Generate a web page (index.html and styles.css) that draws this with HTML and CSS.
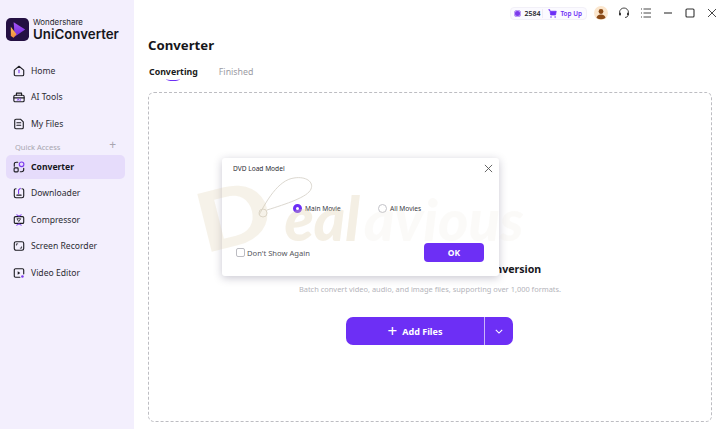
FILE: index.html
```html
<!DOCTYPE html>
<html lang="en">
<head>
<meta charset="utf-8">
<title>UniConverter</title>
<link rel="stylesheet" href="styles.css">
</head>
<body>
<div class="app">
  <aside class="sidebar">
    <div class="brand">
      <svg class="logo" viewBox="0 0 24 24" width="23" height="23">
        <defs>
          <linearGradient id="lg" x1="0" y1="0" x2="0" y2="1"><stop offset="0" stop-color="#a855f7"/><stop offset="1" stop-color="#6d28d9"/></linearGradient>
          <linearGradient id="lo" x1="0" y1="0" x2="0" y2="1"><stop offset="0" stop-color="#fbbf5a"/><stop offset="1" stop-color="#f08a3c"/></linearGradient>
        </defs>
        <rect width="24" height="24" rx="5" fill="#241043"/>
        <path d="M8 4.500 L20 12 L9 19.500 Z" fill="url(#lg)"/>
        <path d="M5 9 L11 17 L8 20.500 Q5.500 20 5 18 Z" fill="url(#lo)"/>
      </svg>
      <div class="brand-text">
        <span class="brand-top">Wondershare</span>
        <span class="brand-name">UniConverter</span>
      </div>
    </div>
    <nav class="nav">
      <a class="nav-item">
        <svg class="ico" viewBox="0 0 14 14"><path d="M1.500 6 L7 1.500 L12.500 6 V11 Q12.500 12.500 11 12.500 H3 Q1.500 12.500 1.500 11 Z" class="st"/><path d="M7 6 V9" class="st pu"/></svg>
        <span>Home</span>
      </a>
      <a class="nav-item">
        <svg class="ico" viewBox="0 0 14 14"><path d="M4 5 V2.500 H10 V5" class="st"/><rect x="1" y="5" width="12" height="7.500" rx="1.500" class="st"/><path d="M1 8 H13" class="st"/><path d="M5 11 L6 9 L7 11 M8.500 9 V11" class="st pu thin"/></svg>
        <span>AI Tools</span>
      </a>
      <a class="nav-item">
        <svg class="ico" viewBox="0 0 14 14"><path d="M2 3 Q2 1.500 3.500 1.500 H9 L12 4.500 V11 Q12 12.500 10.500 12.500 H3.500 Q2 12.500 2 11 Z" class="st"/><path d="M4.500 5.500 H9 M4.500 8.500 H9" class="st"/></svg>
        <span>My Files</span>
      </a>
      <div class="nav-section"><span>Quick Access</span><span class="plus">+</span></div>
      <a class="nav-item active">
        <svg class="ico" viewBox="0 0 14 14"><path d="M1.500 6 V3.500 Q1.500 1.500 4 1.500 H5.500" class="st"/><circle cx="10" cy="3.800" r="2.700" class="st pu"/><rect x="1.300" y="8" width="4.700" height="4.700" rx="1" class="st"/><path d="M12.500 8.500 V10 Q12.500 12.500 10 12.500 H8.500" class="st"/></svg>
        <span>Converter</span>
      </a>
      <a class="nav-item">
        <svg class="ico" viewBox="0 0 14 14"><path d="M3.500 2 Q1.500 2 1.500 4 V10.500 Q1.500 12.500 3.500 12.500 H10.500 Q12.500 12.500 12.500 10.500 V4 Q12.500 2 10.500 2" class="st"/><path d="M8.500 1.500 L6.500 3.500 V7.500" class="st pu"/><path d="M4.500 9.500 H9.500" class="st"/></svg>
        <span>Downloader</span>
      </a>
      <a class="nav-item">
        <svg class="ico" viewBox="0 0 14 14"><rect x="1.500" y="3" width="11" height="8" rx="1.500" class="st"/><path d="M4.500 1 L7 2.500 L9.500 1 M4.500 13 L7 11.500 L9.500 13" class="st pu"/><path d="M5 5.500 H9 L7 8.500 Z" class="st thin"/></svg>
        <span>Compressor</span>
      </a>
      <a class="nav-item">
        <svg class="ico" viewBox="0 0 14 14"><rect x="1.500" y="2" width="11" height="10" rx="2" class="st"/><path d="M4 6 V4.500 H5.500 M10 8 V9.500 H8.500" class="st thin"/></svg>
        <span>Screen Recorder</span>
      </a>
      <a class="nav-item">
        <svg class="ico" viewBox="0 0 14 14"><path d="M8 12 H3 Q1.500 12 1.500 10.500 V3.500 Q1.500 2 3 2 H11 Q12.500 2 12.500 3.500 V8" class="st"/><path d="M5.500 5 L8.500 7 L5.500 9 Z" class="fl"/><circle cx="11" cy="11" r="1.500" fill="#7c3aed"/></svg>
        <span>Video Editor</span>
      </a>
    </nav>
  </aside>

  <main class="main">
    <header class="topbar">
      <div class="credits">
        <span class="coin"></span>
        <span class="count">2584</span>
        <svg class="cart" viewBox="0 0 12 12" width="9" height="9"><path d="M.5 1 H2.500 L3.500 8 H10 L11 3 H3" fill="#6d2ff5" stroke="#6d2ff5"/><circle cx="4" cy="10.500" r="1" fill="#6d2ff5"/><circle cx="9.500" cy="10.500" r="1" fill="#6d2ff5"/></svg>
        <span class="topup">Top Up</span>
      </div>
      <svg class="avatar" viewBox="0 0 14 14" width="14" height="14"><circle cx="7" cy="7" r="7" fill="#fbe6cd"/><circle cx="7" cy="5.500" r="2.400" fill="#8a4a17"/><path d="M2.500 12 Q3 8.500 7 8.500 Q11 8.500 11.500 12 Q7 14.500 2.500 12 Z" fill="#8a4a17"/></svg>
      <svg class="tool" viewBox="0 0 12 12" width="12" height="12"><path d="M1.500 7 V5.500 A4.500 4.500 0 0 1 10.500 5.500 V7" class="tb"/><rect x="1" y="5.500" width="2" height="3" rx=".8" fill="#333"/><rect x="9" y="5.500" width="2" height="3" rx=".8" fill="#333"/><path d="M10 8.500 Q9.500 10.500 7 10.500" class="tb"/></svg>
      <svg class="tool" viewBox="0 0 12 12" width="12" height="12"><path d="M3.500 2 H11 M3.500 6 H11 M3.500 10 H11 M1 2 H2 M1 6 H2 M1 10 H2" class="tb"/></svg>
      <svg class="tool" viewBox="0 0 12 12" width="12" height="12"><path d="M2 6 H10" class="tb wide"/></svg>
      <svg class="tool" viewBox="0 0 12 12" width="12" height="12"><rect x="2" y="2" width="8" height="8" rx="1" class="tb wide"/></svg>
      <svg class="tool" viewBox="0 0 12 12" width="12" height="12"><path d="M2 2 L10 10 M10 2 L2 10" class="tb"/></svg>
    </header>
    <h1 class="title">Converter</h1>
    <div class="tabs">
      <span class="tab current">Converting</span>
      <span class="tab">Finished</span>
    </div>
    <section class="drop">
      <p class="drop-title">Add or Drag Files Here to Start Conversion</p>
      <p class="drop-sub">Batch convert video, audio, and image files, supporting over 1,000 formats.</p>
      <div class="add">
        <button class="add-main"><span class="add-plus">+</span> Add Files</button>
        <button class="add-more"><svg viewBox="0 0 10 6" width="8" height="5"><path d="M1 1 L5 5 L9 1" fill="none" stroke="#fff" stroke-width="1.300"/></svg></button>
      </div>
    </section>
  </main>
</div>

<div class="modal">
  <div class="modal-head">
    <span>DVD Load Model</span>
    <svg viewBox="0 0 10 10" width="9" height="9"><path d="M1 1 L9 9 M9 1 L1 9" fill="none" stroke="#555" stroke-width="1"/></svg>
  </div>
  <div class="radios">
    <label class="radio"><span class="dot on"></span>Main Movie</label>
    <label class="radio"><span class="dot"></span>All Movies</label>
  </div>
  <div class="modal-foot">
    <label class="check"><span class="box"></span>Don't Show Again</label>
    <button class="ok">OK</button>
  </div>
</div>

<div class="watermark" aria-hidden="true">
  <svg class="tag" viewBox="0 0 70 50" width="70" height="50"><path d="M3 41 C10 28 22 6 38 4 C50 2 58 8 55 15 C52 23 30 30 11 36" fill="none" stroke="#dcd8d0" stroke-width="1"/><circle cx="7" cy="39" r="4" fill="none" stroke="#dcd8d0" stroke-width="1"/></svg>
  <span class="wm-d">D</span><span class="wm-a">eal</span><span class="wm-b">avious</span>
</div>
```
FILE: styles.css
```css
* { box-sizing: border-box; }
html, body { margin: 0; height: 100%; }
body { font-family: "Noto Sans", "Open Sans", sans-serif; color: #1d1d22; overflow: hidden; background: #fff; }
.app { display: flex; width: 720px; height: 429px; }

.sidebar { width: 134px; flex: none; background: #f3effd; padding: 18px 9px 0 6px; }
.brand { display: flex; align-items: center; gap: 4px; height: 23px; }
.logo { flex: none; }
.brand-text { display: flex; flex-direction: column; line-height: 1; }
.brand-top { font-family: "Inter", sans-serif; font-size: 7.900px; line-height: 9px; color: #26262c; }
.brand-name { font-family: "Inter", sans-serif; font-size: 13.300px; line-height: 14px; font-weight: 600; color: #17171c; }

.nav { margin-top: 18px; display: flex; flex-direction: column; }
.nav-item { display: flex; align-items: center; gap: 6px; height: 24px; margin-bottom: 2.400px; padding-left: 7px; font-size: 8.600px; color: #2c2c33; border-radius: 5px; }
.nav-item.active { background: #e6dcfb; font-weight: 700; color: #16161b; }
.ico { width: 12px; height: 12px; flex: none; }
.st { fill: none; stroke: #1c1c22; stroke-width: 1.300; stroke-linejoin: round; stroke-linecap: round; }
.st.pu { stroke: #7c3aed; }
.st.thin { stroke-width: .9; }
.fl { fill: #1c1c22; }
.nav-section { display: flex; justify-content: space-between; align-items: center; height: 14px; margin: 1.800px 0 1px; padding: 0 9px 0 9px; font-size: 7.500px; color: #a8a6b0; }
.plus { font-size: 12px; line-height: 12px; margin-top: -3px; }

.main { flex: 1; min-width: 0; padding: 0 8px 7px 14px; display: flex; flex-direction: column; }
.topbar { height: 26px; margin-right: -6px; display: flex; align-items: center; justify-content: flex-end; gap: 10px; }
.credits { display: flex; align-items: center; height: 13px; padding: 0 4px 0 3px; gap: 3px; margin-right: -3px; background: #fbfaff; border: 1px solid #f2f0f8; border-radius: 4px; font-size: 7px; font-weight: 600; }
.coin { width: 7px; height: 7px; border-radius: 50%; background: #7c3aed; box-shadow: 0 0 0 1px #c4a6f7 inset; }
.count { color: #26262c; padding-right: 2px; border-right: 1px solid #eeecf4; }
.cart { margin-left: 2px; }
.topup { color: #6d2ff5; font-size: 6.400px; }
.tool { flex: none; }
.tb { fill: none; stroke: #333; stroke-width: .9; }
.tb.wide { stroke-width: 1.100; }

.title { margin: 8px 0 0; height: 22px; padding-top: 1px; font-size: 13.200px; line-height: 20px; font-weight: 700; color: #16161b; }
.tabs { display: flex; gap: 21px; height: 28px; margin-top: 8px; padding: 2px 0 0 1px; font-size: 8.800px; align-items: flex-start; }
.tab { color: #9b9ba3; line-height: 13px; }
.tab.current { color: #1a1a20; font-weight: 700; position: relative; }
.tab.current::after { content: ""; position: absolute; left: 17px; bottom: -2px; width: 14px; height: 3px; border-bottom: 1.500px solid #6d2ff5; border-radius: 0 0 50% 50%; }

.drop { flex: 1; border: 1px dashed #bdbdc2; border-radius: 6px; display: flex; flex-direction: column; align-items: center; padding-top: 169px; }
.drop-title { margin: 0; font-size: 10.600px; line-height: 15px; font-weight: 700; color: #17171c; white-space: nowrap; }
.drop-sub { margin: 6px 0 0; font-size: 7.450px; line-height: 12px; color: #b4b4ba; white-space: nowrap; }
.add { display: flex; margin-top: 22px; height: 28px; margin-left: -1px; }
.add button { border: 0; background: #6d2ff5; color: #fff; font-family: inherit; height: 28px; }
.add-main { width: 139px; border-radius: 7px 0 0 7px; font-size: 9px; font-weight: 700; display: flex; align-items: center; justify-content: center; gap: 5px; border-right: 1px solid #c9b4fa !important; }
.add-plus { font-size: 17px; line-height: 14px; font-weight: 400; }
.add-more { width: 28px; border-radius: 0 7px 7px 0; display: flex; align-items: center; justify-content: center; padding: 0; }

.modal { position: absolute; left: 222px; top: 158px; width: 277px; height: 118px; background: #fff; border-radius: 3px; box-shadow: 0 2px 8px rgba(40, 30, 70, .25); padding: 0 6px 0 11px; display: flex; flex-direction: column; font-size: 6.600px; color: #2c2c33; }
.modal-head { display: flex; justify-content: space-between; align-items: center; height: 19px; padding-top: 1px; }
.radios { display: flex; gap: 38px; margin-top: 24px; padding-left: 60px; height: 14px; }
.radio { display: flex; align-items: center; gap: 3px; width: 47px; white-space: nowrap; color: #3a3a42; }
.dot { width: 9px; height: 9px; border-radius: 50%; border: 1px solid #c2c2c8; flex: none; }
.dot.on { border: 3px solid #6d2ff5; }
.modal-foot { display: flex; justify-content: space-between; align-items: center; margin-top: 28px; height: 19px; padding: 0 9px 0 3px; }
.check { display: flex; align-items: center; gap: 2px; font-size: 7.600px; color: #55555c; }
.box { width: 9px; height: 9px; border: 1px solid #bcbcc2; border-radius: 2px; flex: none; }
.ok { width: 60px; height: 19px; border: 0; border-radius: 4px; background: #6d2ff5; color: #fff; font-family: inherit; font-size: 8.500px; font-weight: 700; padding: 0; }

.watermark { position: absolute; left: 198px; top: 164px; width: 330px; height: 90px; display: flex; align-items: baseline; pointer-events: none; font-family: "Lato", sans-serif; font-weight: 900; line-height: 90px; white-space: nowrap; }
.wm-d { display: inline-block; font-size: 82px; color: rgba(222, 205, 170, .26); transform: translate(3px, 13px) rotate(-14deg) scaleX(1.2); transform-origin: 0 70%; margin-right: 24px; }
.wm-a { font-size: 60px; color: rgba(222, 205, 170, .32); font-style: italic; }
.wm-b { font-size: 58px; color: rgba(230, 225, 215, .17); font-style: italic; margin-left: 4px; }
.tag { position: absolute; left: 58px; top: 10px; }
```
